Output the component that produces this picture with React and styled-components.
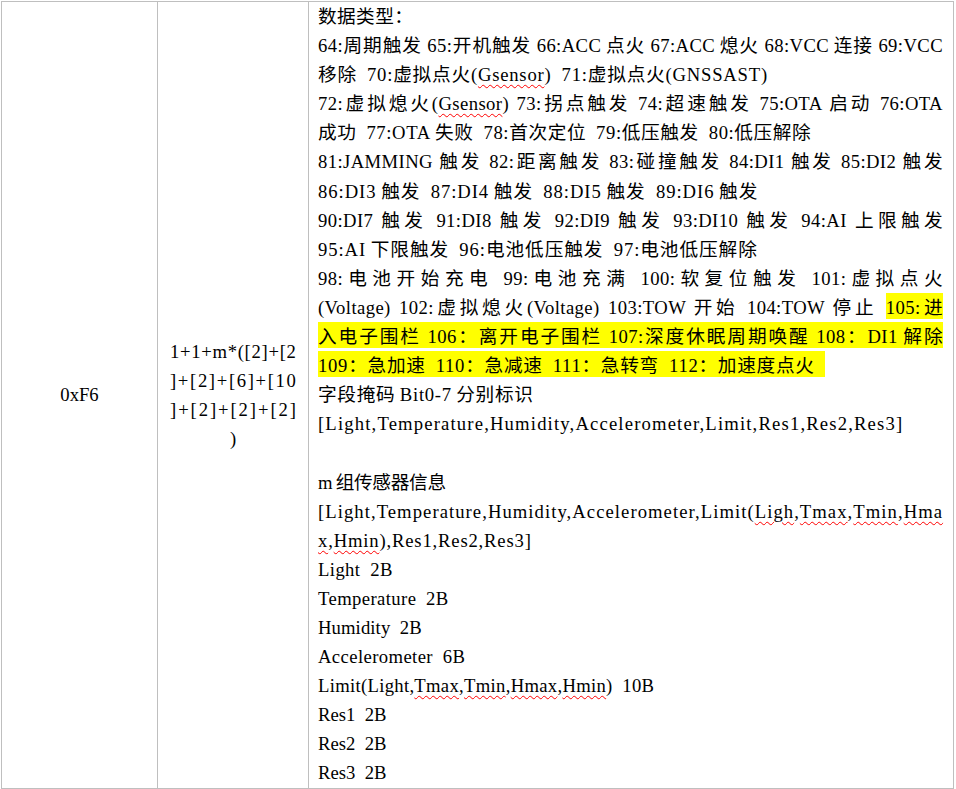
import React from 'react';
import styled, { createGlobalStyle } from 'styled-components';

const Global = createGlobalStyle`
  html, body { margin: 0; padding: 0; background: #fff; }
  body {
    font-family: "Liberation Serif", "Noto Sans CJK SC", serif;
    color: #000;
  }
`;

const Page = styled.div`
  padding: 1px 0 0 1px;
`;

const Table = styled.div`
  display: grid;
  grid-template-columns: 155px 151px 645px;
  width: 953px;
  box-sizing: border-box;
  border: 1px solid #bfbfbf;
  font-size: 18.67px;
  line-height: 29.1px;
`;

const Cell = styled.div`
  box-sizing: border-box;
  border-left: ${p => (p.$first ? 'none' : '1px solid #bfbfbf')};
  display: flex;
  flex-direction: column;
  justify-content: center;
  align-items: ${p => (p.$center ? 'center' : 'stretch')};
  padding: ${p => p.$pad || '0'};
`;

const CodeRow = styled.div`
  width: 126px;
  display: flex;
  justify-content: ${p => (p.$single ? 'center' : 'space-between')};
`;

const Line = styled.div`
  white-space: nowrap;
  text-align: ${p => (p.$j ? 'justify' : 'left')};
  text-align-last: ${p => (p.$j ? 'justify' : 'left')};
  letter-spacing: ${p => p.$ls ?? 0.4}px;
  word-spacing: ${p => p.$ws ?? 4.67}px;
`;

const Mark = styled.span`
  background: #ffff00;
  padding: 4px 0 1px;
`;

const Sq = styled.span`
  text-decoration: underline wavy #ff0000;
  text-decoration-thickness: 1px;
  text-underline-offset: 3px;
`;

const sp = s =>
  s
    .replace(/([A-Za-z0-9])(?=[\u3400-\u9fff])/g, '$1\u2009')
    .replace(/([\u3400-\u9fff])(?=[A-Za-z0-9])/g, '$1\u2009');

const Spread = ({ text }) => (
  <CodeRow $single={text.length === 1}>
    {text.split('').map((c, i) => (
      <span key={i}>{c}</span>
    ))}
  </CodeRow>
);

export default function App() {
  return (
    <Page>
      <Global />
      <Table>
        <Cell $first $center>0xF6</Cell>
        <Cell $center>
          <Spread text="1+1+m*([2]+[2" />
          <Spread text="]+[2]+[6]+[10" />
          <Spread text="]+[2]+[2]+[2]" />
          <Spread text=")" />
        </Cell>
        <Cell $pad="0 10px 0 9px">
          <Line>数据类型：</Line>
          <Line $j $ws={0}>{sp('64:周期触发 65:开机触发 66:ACC点火 67:ACC熄火 68:VCC连接 69:VCC')}</Line>
          <Line $ls={0.78}>
            {sp('移除 70:虚拟点火(')}<Sq>Gsensor</Sq>{sp(') 71:虚拟点火(GNSSAST)')}
          </Line>
          <Line $j $ws={0}>
            {sp('72:虚拟熄火(')}<Sq>Gsensor</Sq>{sp(') 73:拐点触发 74:超速触发 75:OTA启动 76:OTA')}
          </Line>
          <Line $ls={0.6}>{sp('成功 77:OTA失败 78:首次定位 79:低压触发 80:低压解除')}</Line>
          <Line $j $ws={0}>{sp('81:JAMMING触发 82:距离触发 83:碰撞触发 84:DI1触发 85:DI2触发')}</Line>
          <Line $ls={0.94}>{sp('86:DI3触发 87:DI4触发 88:DI5触发 89:DI6触发')}</Line>
          <Line $j $ws={0}>{sp('90:DI7触发 91:DI8触发 92:DI9触发 93:DI10触发 94:AI上限触发')}</Line>
          <Line $ls={0.92}>{sp('95:AI下限触发 96:电池低压触发 97:电池低压解除')}</Line>
          <Line $j $ws={0}>{sp('98:电池开始充电 99:电池充满 100:软复位触发 101:虚拟点火')}</Line>
          <Line $j $ws={0}>
            {sp('(Voltage) 102:虚拟熄火(Voltage) 103:TOW开始 104:TOW停止 ')}
            <Mark>{sp('105:进')}</Mark>
          </Line>
          <Line $j $ws={0}>
            <Mark>{sp('入电子围栏 106：离开电子围栏 107:深度休眠周期唤醒 108：DI1解除')}</Mark>
          </Line>
          <Line $ls={0.72}>
            <Mark>{sp('109：急加速 110：急减速 111：急转弯 112：加速度点火\u00a0')}</Mark>
          </Line>
          <Line $ls={0.7}>{sp('字段掩码Bit0-7分别标识')}</Line>
          <Line $ls={1.16}>[Light,Temperature,Humidity,Accelerometer,Limit,Res1,Res2,Res3]</Line>
          <Line>{'\u00a0'}</Line>
          <Line $ls={-0.3}>{sp('m组传感器信息')}</Line>
          <Line $j $ls={1.05}>
            [Light,Temperature,Humidity,Accelerometer,Limit(<Sq>Ligh</Sq>,<Sq>Tmax</Sq>,
            <Sq>Tmin</Sq>,<Sq>Hma</Sq>
          </Line>
          <Line $ls={0.82}>
            <Sq>x</Sq>,<Sq>Hmin</Sq>),Res1,Res2,Res3]
          </Line>
          <Line>Light 2B</Line>
          <Line>Temperature 2B</Line>
          <Line $ls={0.1}>Humidity 2B</Line>
          <Line>Accelerometer 6B</Line>
          <Line $ls={0.3}>
            Limit(Light,<Sq>Tmax</Sq>,<Sq>Tmin</Sq>,<Sq>Hmax</Sq>,<Sq>Hmin</Sq>) 10B
          </Line>
          <Line $ls={0}>Res1 2B</Line>
          <Line $ls={0}>Res2 2B</Line>
          <Line $ls={0}>Res3 2B</Line>
        </Cell>
      </Table>
    </Page>
  );
}
